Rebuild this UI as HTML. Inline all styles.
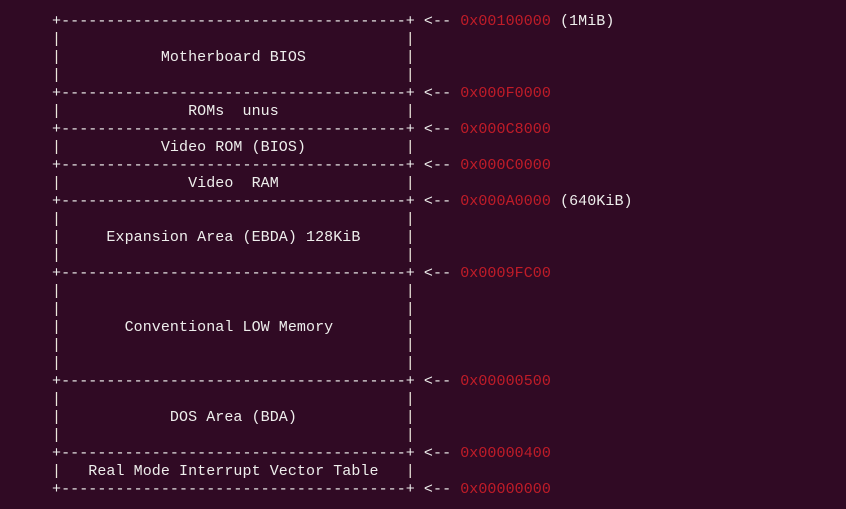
<!DOCTYPE html>
<html><head><meta charset="utf-8"><style>
html,body{margin:0;padding:0;background:#300a24;width:846px;height:509px;overflow:hidden}
pre{position:absolute;left:52px;top:13px;margin:0;font-family:"Liberation Mono",monospace;font-size:15px;line-height:18px;letter-spacing:0.07px;color:#eeeeec}
.p{color:#ece8dc}.r{color:#c01c28}
</style></head><body><pre>+--------------------------------------+ &lt;-- <span class="r">0x00100000</span> (1MiB)
<span class="p">|</span>                                      <span class="p">|</span>
<span class="p">|</span>           Motherboard BIOS           <span class="p">|</span>
<span class="p">|</span>                                      <span class="p">|</span>
+--------------------------------------+ &lt;-- <span class="r">0x000F0000</span>
<span class="p">|</span>              ROMs  unus              <span class="p">|</span>
+--------------------------------------+ &lt;-- <span class="r">0x000C8000</span>
<span class="p">|</span>           Video ROM (BIOS)           <span class="p">|</span>
+--------------------------------------+ &lt;-- <span class="r">0x000C0000</span>
<span class="p">|</span>              Video  RAM              <span class="p">|</span>
+--------------------------------------+ &lt;-- <span class="r">0x000A0000</span> (640KiB)
<span class="p">|</span>                                      <span class="p">|</span>
<span class="p">|</span>     Expansion Area (EBDA) 128KiB     <span class="p">|</span>
<span class="p">|</span>                                      <span class="p">|</span>
+--------------------------------------+ &lt;-- <span class="r">0x0009FC00</span>
<span class="p">|</span>                                      <span class="p">|</span>
<span class="p">|</span>                                      <span class="p">|</span>
<span class="p">|</span>       Conventional LOW Memory        <span class="p">|</span>
<span class="p">|</span>                                      <span class="p">|</span>
<span class="p">|</span>                                      <span class="p">|</span>
+--------------------------------------+ &lt;-- <span class="r">0x00000500</span>
<span class="p">|</span>                                      <span class="p">|</span>
<span class="p">|</span>            DOS Area (BDA)            <span class="p">|</span>
<span class="p">|</span>                                      <span class="p">|</span>
+--------------------------------------+ &lt;-- <span class="r">0x00000400</span>
<span class="p">|</span>   Real Mode Interrupt Vector Table   <span class="p">|</span>
+--------------------------------------+ &lt;-- <span class="r">0x00000000</span></pre></body></html>
